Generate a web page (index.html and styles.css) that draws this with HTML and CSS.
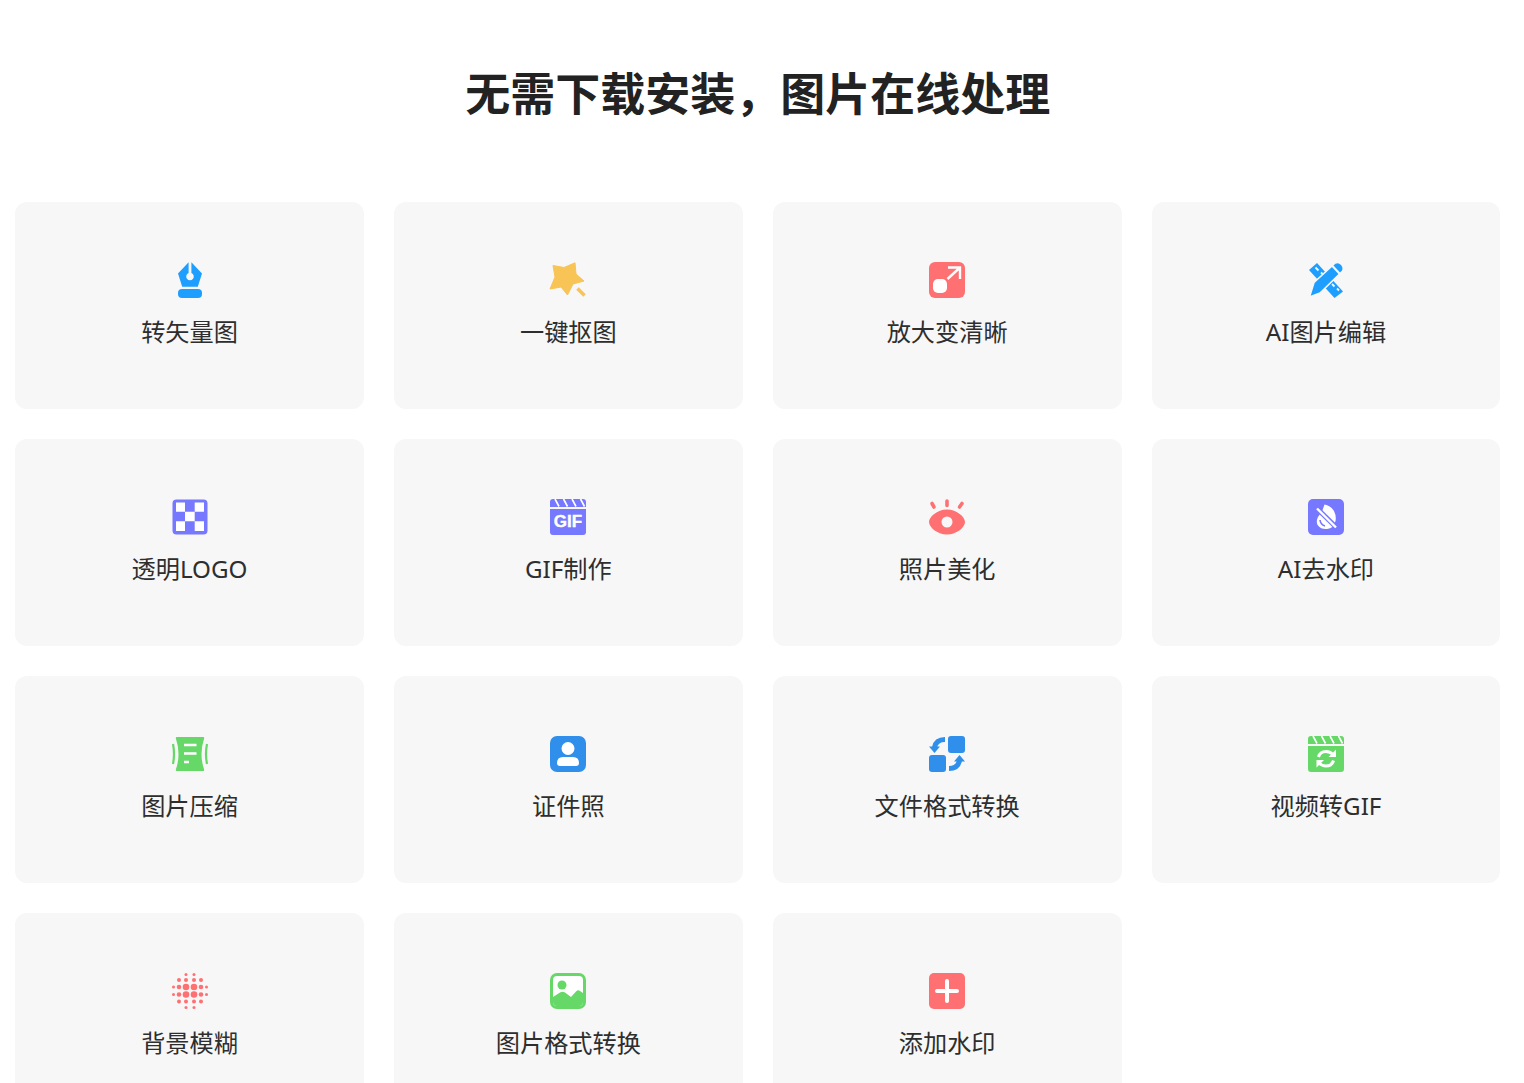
FILE: index.html
```html
<!DOCTYPE html>
<html lang="zh-CN">
<head>
<meta charset="utf-8">
<title>无需下载安装，图片在线处理</title>
<link rel="stylesheet" href="styles.css">
</head>
<body>
<main class="page">
  <h1 class="title">无需下载安装，图片在线处理</h1>
  <section class="grid">
    <a class="card">
      <svg class="icon" viewBox="0 0 36 36"><path class="blue" d="M16.6 0.3V10.9a3.8 3.8 0 1 0 2.8 0V0.3L30 11.5 25.8 24.8H10.2L6 11.5Z"/><rect class="blue" x="6" y="27" width="24" height="9" rx="4"/></svg>
      <span class="label">转矢量图</span>
    </a>
    <a class="card">
      <svg class="icon" viewBox="0 0 36 36"><path class="yellow" stroke-linejoin="round" d="M3 3.5 14 5.5 25 0.8 26 12 34 19 23 22 17.5 33 11 25 0 27 5 15Z"/><path class="yellow-line" d="M27.5 26.5 34.5 33.5"/></svg>
      <span class="label">一键抠图</span>
    </a>
    <a class="card">
      <svg class="icon" viewBox="0 0 36 36"><rect class="red" width="36" height="36" rx="6"/><rect class="white" x="4" y="17" width="14" height="14" rx="5"/><path class="white-line" d="M19 5.5H31V17M31 5.5 18.5 17"/></svg>
      <span class="label">放大变清晰</span>
    </a>
    <a class="card">
      <svg class="icon" viewBox="0 0 36 36"><path class="blue" d="M1 8 9 1 35 29.500 26.500 36Z"/><path class="card-line" d="M7.500 5.500 10.500 8.500M13 10.500 15 12.500M24 22 26.500 24.500M29 26.500 31 28.500"/><path class="blue" stroke="#f7f7f7" stroke-width="1.600" d="M1.500 35 6 20.500 24 4 31.500 12 12 31Z"/><path class="blue" d="M25.500 3.500 27.500 1.800Q30.500 0.500 33 3 35.500 6 33.800 8.800L32 10.500Z"/></svg>
      <span class="label">AI图片编辑</span>
    </a>

    <a class="card">
      <svg class="icon" viewBox="0 0 36 36"><rect class="purple" x="0.500" y="0.500" width="35" height="35" rx="4"/><path class="white" d="M4 3.500H13V12.700H4ZM22.700 3.500H32V12.700H22.700ZM13 12.700H22.700V22.300H13ZM4 22.300H13V32H4ZM22.700 22.300H32V32H22.700Z"/></svg>
      <span class="label">透明LOGO</span>
    </a>
    <a class="card">
      <svg class="icon" viewBox="0 0 36 36"><path class="purple" d="M3 0H33a3 3 0 0 1 3 3V8H0V3A3 3 0 0 1 3 0ZM0 10H36V33a3 3 0 0 1-3 3H3a3 3 0 0 1-3-3Z"/><path class="white-thin" d="M5 0 9 7.500M13.500 0 17.500 7.500M22 0 26 7.500M30.500 0 34.500 7.500"/><text class="gif" x="18" y="27.500" text-anchor="middle">GIF</text></svg>
      <span class="label">GIF制作</span>
    </a>
    <a class="card">
      <svg class="icon" viewBox="0 0 36 36"><path class="red" fill-rule="evenodd" d="M18 10.500C28 10.500 36 18 36 23 36 28 28 35.500 18 35.500 8 35.500 0 28 0 23 0 18 8 10.500 18 10.500ZM18 17.500a5.500 5.500 0 1 0 0 11 5.500 5.500 0 0 0 0-11Z"/><path class="red-line" d="M18 2V6.500M3 4.500 5 8M33 4.500 30.500 8"/></svg>
      <span class="label">照片美化</span>
    </a>
    <a class="card">
      <svg class="icon" viewBox="0 0 36 36"><rect class="purple" width="36" height="36" rx="5"/><path class="white" d="M16.500 5.500Q23 7 26 12 28.500 17 27.500 22 26 29 19 30 13 30.500 10 26.500 7.500 22.500 10 18Q12 15 14 12.500Z"/><path class="purple-wide" d="M8 8.500 30 30"/><path class="purple-line" d="M12 21Q12.500 25.500 17 27"/><path class="white-line" d="M9 9.500 28 28.500"/></svg>
      <span class="label">AI去水印</span>
    </a>

    <a class="card">
      <svg class="icon" viewBox="0 0 36 36"><path class="green" d="M4.500 1H31.500Q32.500 1 32 3 29.500 10 29.500 18 29.500 26 32 33 32.500 35 31.500 35H4.500Q3.500 35 4 33 6.500 26 6.500 18 6.500 10 4 3 3.500 1 4.500 1Z"/><path class="white-line" d="M12 9H24.500M12 17.500H24.500M12 26H17"/><path class="green-line" d="M1 8Q3 18 1 28M35 8Q33 18 35 28"/></svg>
      <span class="label">图片压缩</span>
    </a>
    <a class="card">
      <svg class="icon" viewBox="0 0 36 36"><rect class="sky" width="36" height="36" rx="7"/><circle class="white" cx="18" cy="12.500" r="6.500"/><path class="white" d="M7 27Q7 21 13 21H23Q29 21 29 27 29 30 26 30H10Q7 30 7 27Z"/></svg>
      <span class="label">证件照</span>
    </a>
    <a class="card">
      <svg class="icon" viewBox="0 0 36 36"><rect class="sky" x="19" y="0" width="17" height="17" rx="3"/><rect class="sky" x="0" y="19" width="17" height="17" rx="3"/><path class="sky-line" d="M16 3.500Q7 3.500 5.500 11.500"/><path class="sky" d="M0 10.500H11L5.500 17Z"/><path class="sky-line" d="M20 32.500Q29 32.500 30.500 24.500"/><path class="sky" d="M36 25.500H25L30.500 19Z"/></svg>
      <span class="label">文件格式转换</span>
    </a>
    <a class="card">
      <svg class="icon" viewBox="0 0 36 36"><path class="green" d="M3 0H33a3 3 0 0 1 3 3V8H0V3A3 3 0 0 1 3 0ZM0 10H36V33a3 3 0 0 1-3 3H3a3 3 0 0 1-3-3Z"/><path class="white-thin" d="M5 0 9 7.500M13.500 0 17.500 7.500M22 0 26 7.500M30.500 0 34.500 7.500"/><path class="white-thick" d="M10.500 21Q12 15.500 18 15.500 22 15.500 25 18.500M25.500 24.500Q24 30 18 30 14 30 11 27"/><path class="white" d="M28 13.500V21H20.500ZM8.500 31.500V24H16Z"/></svg>
      <span class="label">视频转GIF</span>
    </a>

    <a class="card">
      <svg class="icon" viewBox="0 0 36 36"><g class="red"><circle cx="14" cy="1.500" r="1.500"/><circle cx="22" cy="1.500" r="1.500"/><circle cx="7" cy="7" r="2"/><circle cx="14" cy="7" r="2"/><circle cx="22" cy="7" r="2"/><circle cx="29" cy="7" r="2"/><circle cx="1.500" cy="14" r="1.500"/><circle cx="7" cy="14" r="2.300"/><circle cx="14" cy="14" r="3.300"/><circle cx="22" cy="14" r="3.300"/><circle cx="29" cy="14" r="2.300"/><circle cx="34.500" cy="14" r="1.500"/><circle cx="1.500" cy="21.500" r="1.500"/><circle cx="7" cy="21.500" r="2.300"/><circle cx="14" cy="21.500" r="3.300"/><circle cx="22" cy="21.500" r="3.300"/><circle cx="29" cy="21.500" r="2.300"/><circle cx="34.500" cy="21.500" r="1.500"/><circle cx="7" cy="28.500" r="2"/><circle cx="14" cy="28.500" r="2"/><circle cx="22" cy="28.500" r="2"/><circle cx="29" cy="28.500" r="2"/><circle cx="14" cy="34.500" r="1.500"/><circle cx="22" cy="34.500" r="1.500"/></g></svg>
      <span class="label">背景模糊</span>
    </a>
    <a class="card">
      <svg class="icon" viewBox="0 0 36 36"><rect class="green" width="36" height="36" rx="7"/><rect class="white" x="3" y="3" width="30" height="30" rx="4"/><path class="green" d="M3 24 10 19.500Q12.500 18 15 19.500L21 24 26 18.500Q28 16.500 30 18L33 20V29a4 4 0 0 1-4 4H7a4 4 0 0 1-4-4Z"/><circle class="green" cx="12" cy="12" r="4.500"/></svg>
      <span class="label">图片格式转换</span>
    </a>
    <a class="card">
      <svg class="icon" viewBox="0 0 36 36"><rect class="red" width="36" height="36" rx="5"/><path class="white-bold" d="M18 8V28M8 18H28"/></svg>
      <span class="label">添加水印</span>
    </a>
  </section>
</main>
</body>
</html>
```

FILE: styles.css
```css
* { box-sizing: border-box; }

html, body {
  height: 1083px;
  margin: 0;
  overflow: hidden;
  background: #fff;
}

body {
  font-family: "Noto Sans", "Noto Sans CJK SC", "Liberation Sans", sans-serif;
  color: #222;
}

.page {
  width: 1515.35px;
  padding: 62px 15px 0 15.15px;
}

.title {
  margin: 0 0 80px;
  font-size: 45px;
  font-family: "Noto Sans CJK SC", sans-serif;
  font-weight: 700;
  line-height: 60px;
  text-align: center;
  color: #222;
}

.grid {
  display: grid;
  grid-template-columns: repeat(4, 1fr);
  grid-auto-rows: 207px;
  gap: 30px;
}

.card {
  display: flex;
  flex-direction: column;
  align-items: center;
  padding-top: 60px;
  background: #f7f7f7;
  border-radius: 12px;
}

.icon {
  display: block;
  width: 36px;
  height: 36px;
  overflow: visible;
}

.label {
  margin-top: 15.5px;
  font-size: 24.2px;
  line-height: 36px;
  color: #2e2e2e;
  white-space: nowrap;
}

.blue { fill: #1e9fff; }
.yellow { fill: #f8c455; stroke: #f8c455; stroke-width: 1; }
.red { fill: #ff7072; }
.purple { fill: #7678ff; }
.green { fill: #66d868; }
.sky { fill: #2f8fea; }
.white { fill: #fff; }

.yellow-line, .white-line, .white-thin, .white-thick, .white-bold, .red-line,
.green-line, .sky-line, .purple-line, .purple-wide, .card-line {
  fill: none;
}

.yellow-line { stroke: #f8c455; stroke-width: 3.5; }
.white-line { stroke: #fff; stroke-width: 2.4; }
.white-thin { stroke: #fff; stroke-width: 1.6; }
.white-thick { stroke: #fff; stroke-width: 3; }
.white-bold { stroke: #fff; stroke-width: 4; stroke-linecap: round; }
.red-line { stroke: #ff7072; stroke-width: 3.6; stroke-linecap: round; }
.green-line { stroke: #66d868; stroke-width: 2.2; }
.sky-line { stroke: #2f8fea; stroke-width: 5; }
.purple-line { stroke: #7678ff; stroke-width: 1.6; }
.purple-wide { stroke: #7678ff; stroke-width: 5; }
.card-line { stroke: #f7f7f7; stroke-width: 1.8; }

.gif {
  font-family: "Liberation Sans", sans-serif;
  font-size: 17px;
  font-weight: 700;
  fill: #fff;
  stroke: #fff;
  stroke-width: 0.4;
}
```
